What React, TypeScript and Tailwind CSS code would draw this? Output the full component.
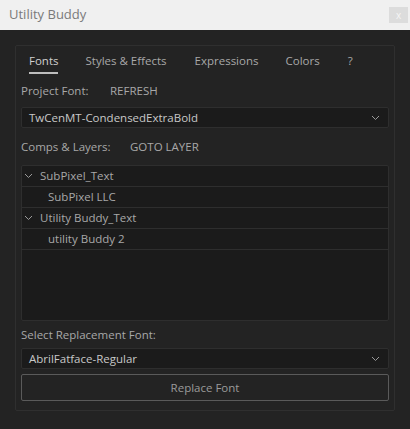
import React from "react";

const Chev = () => (
  <svg width="9" height="6" viewBox="0 0 9 6" className="shrink-0"><path d="M1 1l3.5 3.5L8 1" stroke="#9a9a9a" strokeWidth="1" fill="none" /></svg>
);

export default function App() {
  const f = { fontFamily: '"Open Sans", "Noto Sans", sans-serif' };
  return (
    <div style={f} className="w-[410px] h-[429px] bg-[#232323] text-[11.5px] text-[#a8a8a8] overflow-hidden">
      <div className="h-[30px] bg-[#f0f0f0] flex items-center justify-between pl-[9px] pr-[2px]">
        <span className="text-[13px] text-[#7a7a7a]">Utility Buddy</span>
        <div className="w-[19px] h-[16px] bg-[#dcdcdc] text-[#f5f5f5] text-[10px] flex items-center justify-center">x</div>
      </div>
      <div className="mx-[15px] mt-[15px] h-[366px] border border-[#2f2f2f] rounded-[2px] px-[5px]">
        <div className="flex h-[28px] items-end text-[11.5px]">
          <div className="ml-[8px] flex flex-col items-center"><span className="text-[#cfcfcf] leading-[16px]">Fonts</span><div className="h-[2px] w-[29px] bg-[#bdbdbd] mt-[3px]" /></div>
          <span className="ml-[27px] mb-[5px] leading-[16px]">Styles &amp; Effects</span>
          <span className="ml-[28px] mb-[5px] leading-[16px]">Expressions</span>
          <span className="ml-[27px] mb-[5px] leading-[16px]">Colors</span>
          <span className="ml-[28px] mb-[5px] leading-[16px]">?</span>
        </div>
        <div className="flex h-[33px] items-center">
          <span className="w-[89px]">Project Font:</span><span>REFRESH</span>
        </div>
        <div className="h-[21px] bg-[#1b1b1b] border border-[#2e2e2e] rounded-[2px] flex items-center justify-between pl-[7px] pr-[8px] text-[#c8c8c8]">
          <span>TwCenMT-CondensedExtraBold</span><Chev />
        </div>
        <div className="flex h-[37px] items-center">
          <span className="w-[109px]">Comps &amp; Layers:</span><span>GOTO LAYER</span>
        </div>
        <div className="h-[156px] bg-[#1b1b1b] border border-[#2e2e2e] rounded-[2px]">
          {[
            ["SubPixel_Text", true],
            ["SubPixel LLC", false],
            ["Utility Buddy_Text", true],
            ["utility Buddy 2", false],
          ].map(([t, p], i) => (
            <div key={i} className="h-[21px] border-b border-[#2e2e2e] flex items-center">
              {p ? (<><span className="ml-[2px] mr-[7px]"><Chev /></span><span>{t as string}</span></>) : (<span className="ml-[26px]">{t as string}</span>)}
            </div>
          ))}
        </div>
        <div className="h-[27px] flex items-center">Select Replacement Font:</div>
        <div className="h-[21px] bg-[#1b1b1b] border border-[#2e2e2e] rounded-[2px] flex items-center justify-between pl-[7px] pr-[8px] text-[#c8c8c8]">
          <span>AbrilFatface-Regular</span><Chev />
        </div>
        <div className="mt-[5px] h-[27px] border border-[#5a5a5a] rounded-[2px] flex items-center justify-center text-[#9a9a9a]">Replace Font</div>
      </div>
    </div>
  );
}
